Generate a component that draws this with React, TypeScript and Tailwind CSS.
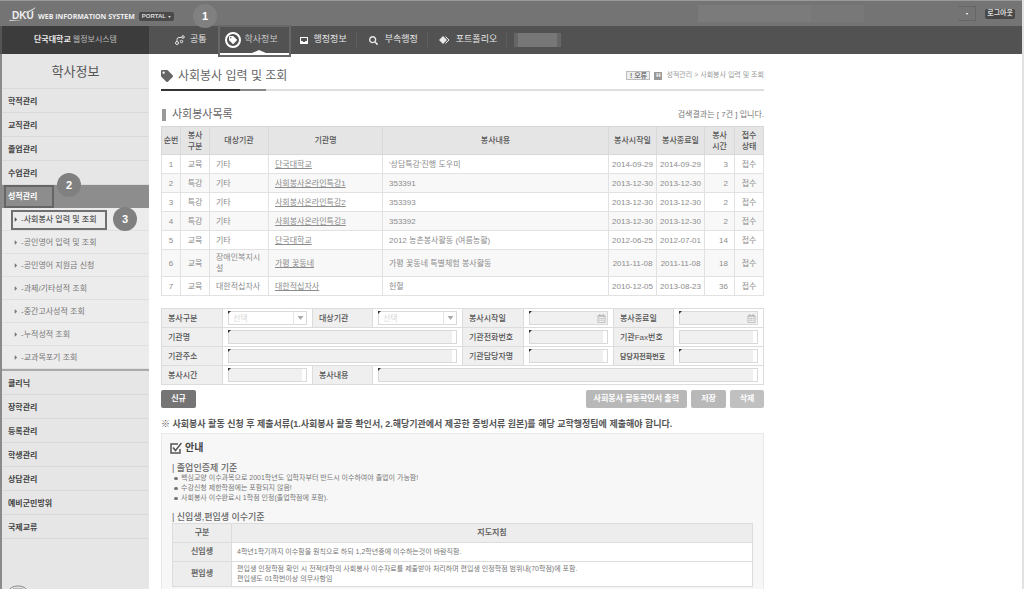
import React from 'react';
import { FaTag, FaSearch, FaCaretRight, FaRegCalendarAlt } from 'react-icons/fa';
import clsx from 'clsx';

const topMenus = ['학적관리', '교직관리', '졸업관리', '수업관리'];
const bottomMenus = ['클리닉', '장학관리', '등록관리', '학생관리', '상담관리', '예비군민방위', '국제교류'];
const subMenus = [
  '-사회봉사 입력 및 조회',
  '-공인영어 입력 및 조회',
  '-공인영어 지원금 신청',
  '-과제/기타성적 조회',
  '-중간고사성적 조회',
  '-누적성적 조회',
  '-교과목포기 조회',
];

const rows = [
  { type: '교육', target: '기타', org: '단국대학교', desc: "'상담특강'진행 도우미", from: '2014-09-29', to: '2014-09-29', hours: 3 },
  { type: '특강', target: '기타', org: '사회봉사온라인특강1', desc: '353391', from: '2013-12-30', to: '2013-12-30', hours: 2 },
  { type: '특강', target: '기타', org: '사회봉사온라인특강2', desc: '353393', from: '2013-12-30', to: '2013-12-30', hours: 2 },
  { type: '특강', target: '기타', org: '사회봉사온라인특강3', desc: '353392', from: '2013-12-30', to: '2013-12-30', hours: 2 },
  { type: '교육', target: '기타', org: '단국대학교', desc: '2012 농촌봉사활동 (여름농활)', from: '2012-06-25', to: '2012-07-01', hours: 14 },
  { type: '교육', target: '장애인복지시설', org: '가평 꽃동네', desc: '가평 꽃동네 특별체험 봉사활동', from: '2011-11-08', to: '2011-11-08', hours: 18 },
  { type: '교육', target: '대한적십자사', org: '대한적십자사', desc: '헌혈', from: '2010-12-05', to: '2013-08-23', hours: 36 },
];

function NodesIcon() {
  return (
    <svg viewBox="0 0 20 20" className="h-[10px] w-[10px]" fill="none" stroke="currentColor" strokeWidth="2">
      <circle cx="4" cy="16" r="3" />
      <circle cx="13" cy="13" r="2.5" />
      <circle cx="16" cy="4" r="2.5" />
      <path d="M4 13V9Q4 5 8 5h5" />
    </svg>
  );
}

function TrayIcon() {
  return (
    <svg viewBox="0 0 16 14" className="h-[7px] w-2">
      <path fillRule="evenodd" d="M1 0h14l1 1v12l-1 1H1l-1-1V1zM2 2v6h3l1 2h4l1-2h3V2z" fill="#fff" />
    </svg>
  );
}

function DiamondIcon() {
  return (
    <svg viewBox="0 0 22 16" className="h-2 w-[11px]">
      <path d="M8 0l8 8-8 8-8-8z" fill="currentColor" />
      <path d="M13 1l7 7-7 7" fill="none" stroke="currentColor" strokeWidth="2" />
    </svg>
  );
}

function CheckIcon() {
  return (
    <svg viewBox="0 0 24 24" className="h-3 w-3" fill="none" stroke="#555">
      <path d="M16 4H2v18h18v-8" strokeWidth="3" />
      <path d="M6 11l5 6L23 2" strokeWidth="3" />
    </svg>
  );
}

function StepBadge({ n, className }: { n: number; className: string }) {
  return (
    <span
      className={clsx(
        'absolute z-10 flex h-6 w-6 items-center justify-center rounded-full bg-[#808080] text-[11px] font-bold text-white',
        className,
      )}
    >
      {n}
    </span>
  );
}

function Corner() {
  return (
    <svg viewBox="0 0 3 3" className="absolute top-0 left-0 h-[3px] w-[3px]">
      <path d="M0 0h3L0 3z" fill="#333" />
    </svg>
  );
}

function TextField({ id, required = true, date = false }: { id: string; required?: boolean; date?: boolean }) {
  return (
    <div className="relative mx-[5px]">
      <input
        id={id}
        type="text"
        className="block h-[14px] w-full border border-[#d9d9d9] bg-[#f0f0f0] bg-clip-content pr-1 text-[8px]"
      />
      {required && <Corner />}
      {date && (
        <button type="button" aria-label="달력" className="absolute top-px right-px flex h-3 w-3 items-center justify-center bg-[#f0f0f0] text-[#b5b5b5]">
          <FaRegCalendarAlt className="h-[9px] w-[9px]" />
        </button>
      )}
    </div>
  );
}

function SelectField({ id }: { id: string }) {
  return (
    <div className="relative mx-[5px]">
      <select id={id} className="block h-[14px] w-full appearance-none border border-[#d9d9d9] bg-white pl-1 text-[8px] leading-[11px] text-[#d8d8d8]">
        <option>선택</option>
      </select>
      <Corner />
      <span className="pointer-events-none absolute top-0 right-0 flex h-[14px] w-[14px] items-center justify-center border-l border-[#e5e5e5]">
        <svg viewBox="0 0 6 4" className="h-1 w-[7px]">
          <path d="M0 0h6L3 4z" fill="#aaa" />
        </svg>
      </span>
    </div>
  );
}

function Label({ htmlFor, children, small = false }: { htmlFor: string; children: React.ReactNode; small?: boolean }) {
  return (
    <th className={clsx('h-[19px] border border-[#dcdcdc] bg-[#efefef] pl-[6px] text-left whitespace-nowrap text-[#555]', small ? 'text-[7px] font-bold' : 'text-[8px] font-medium')}>
      <label htmlFor={htmlFor}>{children}</label>
    </th>
  );
}

function Field({ children, colSpan }: { children: React.ReactNode; colSpan?: number }) {
  return (
    <td colSpan={colSpan} className="border border-[#dcdcdc] p-0">
      {children}
    </td>
  );
}

function MenuItem({ children }: { children: React.ReactNode }) {
  return (
    <li className="h-6 border-b border-[#dadada]">
      <a href="#" className="flex h-full items-center pt-[2px] pl-[6px] text-[8px] font-bold text-[#444]">{children}</a>
    </li>
  );
}

function Header() {
  return (
    <header>
      <div className="flex h-[26px] items-center border-t border-[#999] bg-[#747474] pl-[9px] text-white">
        <svg viewBox="0 0 28 16" className="h-4 w-7">
          <text x="3" y="13" fontFamily="Liberation Sans Narrow, Liberation Sans" fontSize="10" fontWeight="bold" fill="#eee">DKU</text>
          <path d="M0 14h14l-13 1zM17 6q5-2 10-5-3 4-10 6z" fill="#ddd" />
        </svg>
        <span className="ml-px pt-[6px] font-['Open_Sans'] text-[7px] leading-[10px] font-bold whitespace-nowrap text-[#eee]">WEB INFORMATION SYSTEM</span>
        <button type="button" className="mt-[6px] ml-1 flex h-[9px] items-center gap-[2px] rounded-xs bg-[#4a4a4a] px-[3px] text-[6px] leading-[9px] font-bold text-[#ddd]">
          PORTAL
          <svg viewBox="0 0 4 3" className="h-[2px] w-[3px]"><path d="M0 0h4L2 3z" fill="#ddd" /></svg>
        </button>
        <div className="mr-[94px] ml-auto flex h-[17px] w-[166px]">
          <span className="w-[113px] bg-[#7b7b7b]" />
          <span className="flex-1 bg-[#787878]" />
        </div>
        <button type="button" aria-label="계정" className="flex h-[15px] w-[18px] items-center justify-center border border-l-0 border-[#666]">
          <svg viewBox="0 0 4 3" className="h-[2px] w-1"><path d="M0 0h4L2 3z" fill="#eee" /></svg>
        </button>
        <button type="button" className="mr-[7px] ml-[9px] flex h-[10px] items-center rounded-xs bg-[#484848] px-[2px] text-[7px] font-bold whitespace-nowrap text-[#ddd]">로그아웃</button>
      </div>

      <div className="flex h-7 bg-[#525252] text-[9px] text-[#e8e8e8]">
        <div className="flex w-[149px] shrink-0 items-center justify-center gap-[2px] border-l-2 border-[#555] bg-[#3c3c3c] text-[8px]">
          <strong>단국대학교</strong>
          <span className="text-[#bbb]">웹정보시스템</span>
        </div>
        <nav className="flex items-center whitespace-nowrap">
          <a href="#" className="flex items-center gap-[5px] pr-[11px] pl-[26px]">
            <NodesIcon /> 공통
          </a>
          <div className="relative h-full w-[73px]">
            <a href="#" className="absolute inset-x-0 -top-px z-10 flex h-8 items-center border-2 border-[#686868] pb-[2px] pl-[5px] text-[#c8c8c8]">
              <span className="mr-1 flex h-4 w-4 items-center justify-center rounded-full border-2 border-white text-white">
                <FaTag className="h-2 w-2" />
              </span>
              학사정보
              <svg viewBox="0 0 69 5" className="absolute bottom-0 left-0 h-[5px] w-full">
                <path d="M0 3h32l7-3 7 3h23v2H0z" fill="#fff" />
              </svg>
            </a>
          </div>
          <a href="#" className="flex items-center gap-[6px] border-r border-[#5e5e5e] pr-[9px] pl-[9px]">
            <TrayIcon /> 행정정보
          </a>
          <a href="#" className="flex items-center gap-[7px] border-r border-[#5e5e5e] pr-[9px] pl-[12px]">
            <FaSearch className="h-[9px] w-[9px]" /> 부속행정
          </a>
          <a href="#" className="flex items-center gap-[6px] border-r border-[#5e5e5e] pr-[9px] pl-[11px]">
            <DiamondIcon /> 포트폴리오
          </a>
          <span className="ml-[7px] h-[14px] w-[47px] border-x-4 border-[#666] bg-[#777]" />
        </nav>
      </div>
      <StepBadge n={1} className="top-1 left-[193px]" />
    </header>
  );
}

function Sidebar() {
  return (
    <aside className="flex w-[149px] shrink-0 flex-col border-l-2 border-[#8a8a8a] bg-[#e6e6e6]">
      <h2 className="flex h-[35px] items-center justify-center border-b border-[#dadada] pt-[2px] text-[13px] text-[#555]">학사정보</h2>
      <ul>
        {topMenus.map(m => <MenuItem key={m}>{m}</MenuItem>)}
        <li className="relative">
          <a href="#" className="flex h-[23px] items-center bg-[#8d8d8d] text-[8px] font-bold text-white">
            <span className="ml-[2px] flex h-[23px] w-[50px] items-center border-2 border-[#656565] pl-[2px]">성적관리</span>
          </a>
          <StepBadge n={2} className="-top-3 left-[55px]" />
          <ul className="relative border-b-2 border-[#aaa] bg-[#ececec]">
            {subMenus.map((m, i) => (
              <li key={m} className="flex h-[23px] items-center border-b border-[#e0e0e0] pt-px pl-[9px]">
                <a
                  href="#"
                  className={clsx(
                    'flex items-center gap-[3px] text-[8px] whitespace-nowrap',
                    i === 0 ? 'h-5 w-24 border-2 border-[#707070] pl-px font-medium text-[#555]' : 'pl-[3px] text-[#777]',
                  )}
                >
                  <FaCaretRight className="h-[7px] w-[4px]" />
                  {m}
                </a>
              </li>
            ))}
            <StepBadge n={3} className="-top-px left-[111px]" />
          </ul>
        </li>
        {bottomMenus.map(m => <MenuItem key={m}>{m}</MenuItem>)}
      </ul>
      <svg viewBox="0 0 20 4" className="mt-auto ml-[6px] h-1 w-5" fill="none" stroke="#888">
        <ellipse cx="10" cy="6" rx="9" ry="5" />
        <path d="M5 4h10" />
      </svg>
    </aside>
  );
}

function VolunteerTable() {
  const th = 'border border-[#d8d8d8] bg-[#e5e5e5] p-0 text-center font-medium text-[#555]';
  const td = 'border border-[#e2e2e2] px-0 py-[2px] text-center';
  const tdLeft = 'border border-[#e2e2e2] px-[6px] py-[2px] break-all';
  return (
    <table className="w-full table-fixed border-collapse text-[8px] leading-[11px] text-[#8c8c8c]">
      <colgroup>
        <col className="w-[19px]" />
        <col className="w-[29px]" />
        <col className="w-[59px]" />
        <col className="w-[114px]" />
        <col />
        <col className="w-[48px]" />
        <col className="w-[48px]" />
        <col className="w-[30px]" />
        <col className="w-[29px]" />
      </colgroup>
      <thead>
        <tr className="h-7">
          <th className={th}>순번</th>
          <th className={th}>봉사<br />구분</th>
          <th className={th}>대상기관</th>
          <th className={th}>기관명</th>
          <th className={th}>봉사내용</th>
          <th className={th}>봉사시작일</th>
          <th className={th}>봉사종료일</th>
          <th className={th}>봉사<br />시간</th>
          <th className={th}>접수<br />상태</th>
        </tr>
      </thead>
      <tbody>
        {rows.map((r, i) => (
          <tr key={i} className="h-[19px] even:bg-[#f8f8f8]">
            <td className={td}>{i + 1}</td>
            <td className={td}>{r.type}</td>
            <td className={tdLeft}>{r.target}</td>
            <td className={tdLeft}><a href="#" className="underline">{r.org}</a></td>
            <td className={tdLeft}>{r.desc}</td>
            <td className={td}>{r.from}</td>
            <td className={td}>{r.to}</td>
            <td className="border border-[#e2e2e2] py-[2px] pr-[6px] text-right">{r.hours}</td>
            <td className={td}>접수</td>
          </tr>
        ))}
      </tbody>
    </table>
  );
}

function VolunteerForm() {
  return (
    <table className="mt-3 w-full table-fixed border-collapse text-[8px] leading-[11px]">
      <colgroup>
        <col className="w-[61px]" />
        <col />
        <col className="w-[60px]" />
        <col />
        <col className="w-[61px]" />
        <col />
        <col className="w-[60px]" />
        <col />
      </colgroup>
      <tbody>
        <tr>
          <Label htmlFor="type">봉사구분</Label>
          <Field><SelectField id="type" /></Field>
          <Label htmlFor="target">대상기관</Label>
          <Field><SelectField id="target" /></Field>
          <Label htmlFor="from">봉사시작일</Label>
          <Field><TextField id="from" date /></Field>
          <Label htmlFor="to">봉사종료일</Label>
          <Field><TextField id="to" date /></Field>
        </tr>
        <tr>
          <Label htmlFor="org">기관명</Label>
          <Field colSpan={3}><TextField id="org" /></Field>
          <Label htmlFor="tel">기관전화번호</Label>
          <Field><TextField id="tel" /></Field>
          <Label htmlFor="fax">기관Fax번호</Label>
          <Field><TextField id="fax" required={false} /></Field>
        </tr>
        <tr>
          <Label htmlFor="addr">기관주소</Label>
          <Field colSpan={3}><TextField id="addr" /></Field>
          <Label htmlFor="manager">기관담당자명</Label>
          <Field><TextField id="manager" /></Field>
          <Label htmlFor="managerTel" small>담당자전화번호</Label>
          <Field><TextField id="managerTel" /></Field>
        </tr>
        <tr>
          <Label htmlFor="hours">봉사시간</Label>
          <Field><TextField id="hours" /></Field>
          <Label htmlFor="desc">봉사내용</Label>
          <Field colSpan={5}><TextField id="desc" /></Field>
        </tr>
      </tbody>
    </table>
  );
}

function Guide() {
  const th = 'border border-[#dcdcdc] bg-[#ededed] p-0 text-center text-[8px] font-bold text-[#666]';
  const td = 'border border-[#dcdcdc] bg-white py-0 pl-[5px]';
  return (
    <section className="flex-1 border border-b-0 border-[#e8e8e8] bg-[#f7f7f7] px-[10px] pt-2 text-[7px] leading-[10px] text-[#777]">
      <h3 className="-ml-[2px] flex h-3 items-center gap-[3px] text-[10px] font-bold text-[#444]">
        <CheckIcon /> 안내
      </h3>
      <h4 className="mt-[9px] text-[9px] leading-[10px] font-medium text-[#666]">| 졸업인증제 기준</h4>
      <ul>
        {[
          '핵심교양 이수과목으로 2001학년도 입학자부터 반드시 이수하여야 졸업이 가능함!',
          '수강신청 제한학점에는 포함되지 않음!',
          '사회봉사 이수완료시 1학점 인정(졸업학점에 포함).',
        ].map(t => (
          <li key={t} className="flex items-center gap-[3px] pl-[2px]">
            <span className="h-[3px] w-1 rounded-full bg-[#777]" />
            {t}
          </li>
        ))}
      </ul>
      <h4 className="mt-[9px] text-[9px] leading-[10px] font-medium text-[#666]">| 신입생,편입생 이수기준</h4>
      <table className="mt-px w-full table-fixed border-collapse">
        <colgroup>
          <col className="w-[59px]" />
          <col />
        </colgroup>
        <tbody>
          <tr className="h-[19px]">
            <th className={th}>구분</th>
            <th className={th}>지도지침</th>
          </tr>
          <tr className="h-[19px]">
            <th className={th}>신입생</th>
            <td className={td}>4학년1학기까지 이수함을 원칙으로 하되 1,2학년중에 이수하는것이 바람직함.</td>
          </tr>
          <tr className="h-[25px]">
            <th className={th}>편입생</th>
            <td className={td}>
              편입생 인정학점 확인 시 전적대학의 사회봉사 이수자료를 제출받아 처리하며 편입생 인정학점 범위내(70학점)에 포함.<br />
              편입생도 01학번이상 의무사항임
            </td>
          </tr>
        </tbody>
      </table>
    </section>
  );
}

export default function App() {
  return (
    <div className="relative flex min-h-screen flex-col border-r-2 border-[#e2e2e2] bg-white font-['Liberation_Sans','Noto_Sans_CJK_KR',sans-serif]">
      <Header />
      <div className="flex flex-1">
        <Sidebar />
        <main className="ml-3 flex w-full max-w-[603px] flex-col">
          <div className="flex h-[35px] items-center pt-2">
            <FaTag className="h-3 w-3 text-[#666]" />
            <h1 className="ml-[5px] text-[12px] text-[#666]">사회봉사 입력 및 조회</h1>
            <div className="ml-auto flex items-center gap-1 text-[7px] text-[#999]">
              <button type="button" className="h-[9px] w-6 border border-[#bbb] bg-[#eee] text-[7px] leading-[7px] font-bold whitespace-nowrap text-[#777]">! 오류</button>
              <span className="flex h-2 w-2 items-center justify-center bg-[#999] text-[6px] font-bold text-white">H</span>
              <span>성적관리 &gt; 사회봉사 입력 및 조회</span>
            </div>
          </div>
          <div className="flex h-[2px] bg-[#dedede]">
            <span className="w-[79px] bg-[#333]" />
            <span className="w-[26px] bg-[#888]" />
          </div>

          <div className="flex h-[35px] items-center pt-3">
            <span className="ml-px h-3 w-1 bg-[#999]" />
            <h2 className="ml-[6px] text-[11px] text-[#666]">사회봉사목록</h2>
            <p className="ml-auto text-[8px] text-[#777]">검색결과는 [ 7건 ] 입니다.</p>
          </div>
          <VolunteerTable />
          <VolunteerForm />

          <div className="mt-[5px] flex gap-1 text-[8px] font-bold text-white">
            <button type="button" className="mr-auto h-[18px] w-[35px] rounded-xs bg-[#757575]">신규</button>
            <button type="button" className="h-[18px] rounded-xs bg-[#b8b8b8] px-2">사회봉사 활동확인서 출력</button>
            <button type="button" className="h-[18px] w-[35px] rounded-xs bg-[#b8b8b8]">저장</button>
            <button type="button" className="h-[18px] w-[34px] rounded-xs bg-[#c0c0c0]">삭제</button>
          </div>
          <p className="mt-[11px] mb-[3px] text-[9px] leading-[11px] font-bold whitespace-nowrap text-[#555]">
            ※ 사회봉사 활동 신청 후 제출서류(1.사회봉사 활동 확인서, 2.해당기관에서 제공한 증빙서류 원본)를 해당 교학행정팀에 제출해야 합니다.
          </p>
          <Guide />
        </main>
      </div>
    </div>
  );
}
